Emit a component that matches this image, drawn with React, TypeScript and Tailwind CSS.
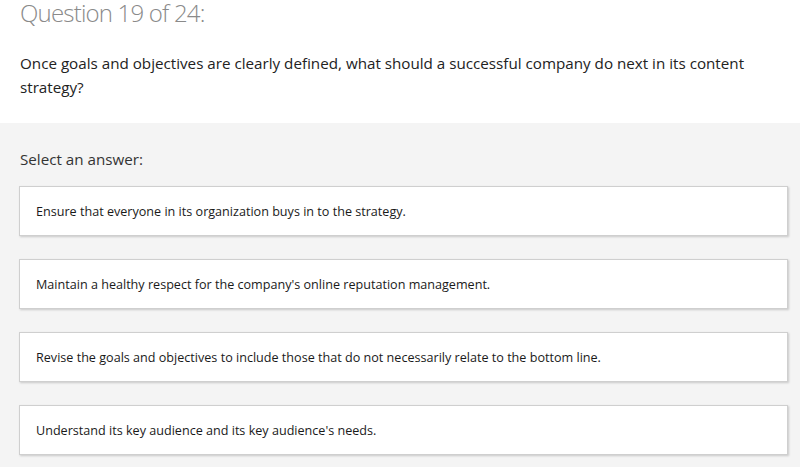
import React from "react";

const answers = [
  "Ensure that everyone in its organization buys in to the strategy.",
  "Maintain a healthy respect for the company's online reputation management.",
  "Revise the goals and objectives to include those that do not necessarily relate to the bottom line.",
  "Understand its key audience and its key audience's needs.",
];

export default function App() {
  return (
    <div className="w-[800px] h-[467px] overflow-hidden bg-[#f4f4f4] font-['Open_Sans',sans-serif]">
      <div className="bg-white pl-5 pr-5 pb-6 pt-px">
        <h1 className="text-[24px] leading-[23px] font-light tracking-[-0.8px] text-[#8a8a8a]">Question 19 of 24:</h1>
        <p className="mt-[27px] text-[15.2px] leading-[24px] text-[#222]">
          Once goals and objectives are clearly defined, what should a successful company do next in its content strategy?
        </p>
      </div>
      <div className="pl-[19px] pr-[12px] pt-6">
        <p className="pl-px text-[15.2px] leading-[24px] text-[#333]">Select an answer:</p>
        <div className="mt-[15px] flex flex-col gap-[23px]">
          {answers.map((a) => (
            <div
              key={a}
              className="h-[50px] flex items-center pt-[1px] pl-4 bg-white border border-[#cfcfcf] shadow-[1px_1px_2px_rgba(0,0,0,0.18)] text-[12.6px] leading-[16px] text-[#1a1a1a]"
            >
              {a}
            </div>
          ))}
        </div>
      </div>
    </div>
  );
}
